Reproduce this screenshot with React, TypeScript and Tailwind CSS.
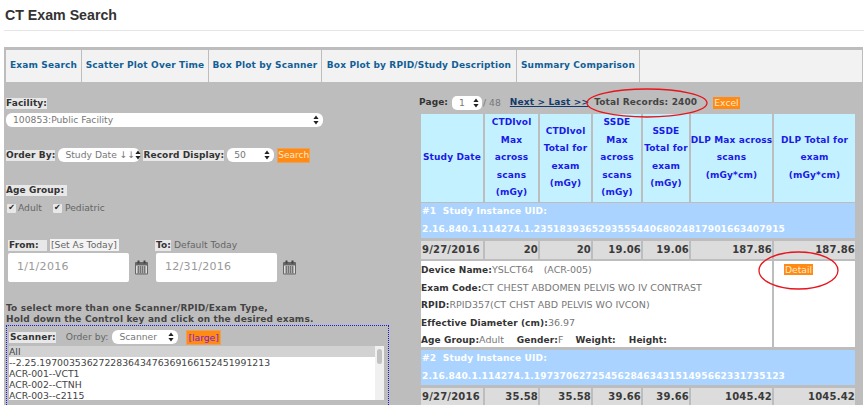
import type { ReactNode } from 'react';

const Updown = () => (
  <svg width="6" height="10" viewBox="0 0 6 10" className="shrink-0">
    <path d="M3 0.5 L5.6 4 H0.4 Z M3 9.5 L5.6 6 H0.4 Z" fill="#222" />
  </svg>
);

const FakeSelect = ({ label, className }: { label: string; className: string }) => (
  <div className={`flex items-center justify-between bg-white rounded-[6px] text-[#777] text-[9.2px] pl-[7px] pr-[4px] h-[14px] ${className}`}>
    <span className="whitespace-nowrap">{label}</span>
    <Updown />
  </div>
);

const Calendar = () => (
  <svg width="15" height="15" viewBox="0 0 15 15" className="shrink-0">
    <rect x="1" y="2" width="13" height="12.5" fill="#666" rx="1" />
    <rect x="2" y="5.5" width="11" height="8" fill="#ddd" />
    <rect x="3.5" y="0.5" width="2" height="3" fill="#444" />
    <rect x="9.5" y="0.5" width="2" height="3" fill="#444" />
    <path d="M3 7h9M3 9h9M3 11h9M3 13h9M4.5 6v7M6.5 6v7M8.5 6v7M10.5 6v7" stroke="#666" strokeWidth="0.8" />
  </svg>
);

const columns = 'grid grid-cols-[62px_53px_51px_48px_46px_81px_81px] gap-[2px]';

const DataRow = ({ values }: { values: string[] }) => (
  <div className={`${columns} h-[18px] mt-[3px] leading-[18px] font-bold text-[#3a3a3a] text-[10px] tracking-[0.2px]`}>
    {values.map((v, i) => (
      <div key={i} className={`bg-[#dcdcdc] ${i === 0 ? 'pl-[1px]' : 'text-right'}`}>{v}</div>
    ))}
  </div>
);

const UidRow = ({ n, uid, className }: { n: number; uid: string; className: string }) => (
  <div className={`bg-[#aad4ff] h-[35px] text-white font-bold text-[9px] tracking-[0.18px] leading-[17.5px] px-[1px] ${className}`}>
    <div className="whitespace-pre">{`#${n}  Study Instance UID:`}</div>
    <div>{uid}</div>
  </div>
);

const Head = ({ lines }: { lines: string[] }) => (
  <div className="bg-[#c4f1ff] flex flex-col items-center justify-center text-[#1a1ae6] font-bold text-[9px] tracking-[0.15px] leading-[17.5px] whitespace-nowrap">
    {lines.map((l) => (
      <div key={l}>{l}</div>
    ))}
  </div>
);

const Tab = ({ label, className }: { label: string; className: string }) => (
  <div className={`bg-[#f2f2f2] flex items-center justify-center text-[#125f96] font-bold text-[9px] tracking-[0.15px] whitespace-nowrap ${className}`}>
    {label}
  </div>
);

const Label = ({ children, className = '' }: { children: ReactNode; className?: string }) => (
  <span className={`bg-[#e8e8e8] font-bold text-[#333] text-[9px] tracking-[0.1px] leading-[11px] ${className}`}>{children}</span>
);

const B = ({ children, className = '' }: { children: ReactNode; className?: string }) => (
  <span className={`font-bold text-[#333] text-[9px] tracking-[0.1px] ${className}`}>{children}</span>
);

const InfoLine = ({ children }: { children: ReactNode }) => (
  <div className="h-[17.5px] whitespace-nowrap">{children}</div>
);

export default function App() {
  return (
    <div className="relative w-[864px] h-[405px] overflow-hidden bg-white font-['DejaVu_Sans',sans-serif] text-[9.2px]">
      <div className="h-[31px] ml-[4px] border-b border-[#e6e6e6] font-['Liberation_Sans',sans-serif] font-bold text-[#333] text-[14.2px] pt-[6px] pl-[1px] leading-[18px]">
        CT Exam Search
      </div>

      <div className="ml-[4px] mt-[16px] w-[859px] h-[360px] bg-[#bdbdbd] pt-[3px] pl-[2px]">
        <div className="flex gap-[1px] h-[32px] w-[856px]">
          <Tab label="Exam Search" className="w-[75px]" />
          <Tab label="Scatter Plot Over Time" className="w-[126px]" />
          <Tab label="Box Plot by Scanner" className="w-[112px]" />
          <Tab label="Box Plot by RPID/Study Description" className="w-[194px]" />
          <Tab label="Summary Comparison" className="w-[122px]" />
          <div className="flex-1 bg-[#f2f2f2]" />
        </div>

        <div className="flex">
          <div className="w-[415px] shrink-0 text-[#666]">
            <div className="flex mt-[16px]"><Label>Facility:</Label></div>
            <FakeSelect label="100853:Public Facility" className="mt-[4px] w-[317px]" />

            <div className="flex items-center mt-[21px] h-[14px]">
              <Label>Order By:</Label>
              <FakeSelect label="Study Date ↓↓" className="ml-[3px] w-[82px]" />
              <Label className="ml-[3px]">Record Display:</Label>
              <FakeSelect label="50" className="ml-[3px] w-[47px]" />
              <span className="ml-[3px] bg-[#ff8a14] text-[#ffe9c9] text-[9px] leading-[13px] border border-[#e9a25c]">Search</span>
            </div>

            <div className="flex mt-[23px]"><Label className="pr-[3px]">Age Group:</Label></div>
            <div className="flex items-center mt-[6px] leading-[12px] h-[12px]">
              <span className="w-[9px] h-[9px] bg-[#e8e8e8] rounded-[1px] flex items-center justify-center text-[#222] text-[8px] font-bold ml-[1px]">✔</span>
              <span className="ml-[2px]">Adult</span>
              <span className="w-[9px] h-[9px] bg-[#e8e8e8] rounded-[1px] flex items-center justify-center text-[#222] text-[8px] font-bold ml-[11px]">✔</span>
              <span className="ml-[3px]">Pediatric</span>
            </div>

            <div className="flex mt-[25px] h-[12px] items-center ml-[2px]">
              <Label className="w-[39px] pl-[1px]">From:</Label>
              <span className="ml-[3px] w-[69px] bg-[#f4f4f4] leading-[12px] pl-[1px]">[Set As Today]</span>
              <Label className="ml-[36px] pl-[1px]">To:</Label>
              <span className="ml-[3px]">Default Today</span>
            </div>
            <div className="flex items-center mt-[2px] ml-[2px]">
              <div className="w-[121px] h-[29px] bg-white rounded-[2px] flex items-center pl-[9px] text-[#999] text-[11px] tracking-[0.3px]">1/1/2016</div>
              <div className="ml-[5px]"><Calendar /></div>
              <div className="ml-[7px] w-[121px] h-[29px] bg-white rounded-[2px] flex items-center pl-[9px] text-[#999] text-[11px] tracking-[0.3px]">12/31/2016</div>
              <div className="ml-[5px]"><Calendar /></div>
            </div>

            <div className="mt-[21px] font-bold text-[#444] text-[9px] leading-[11px] tracking-[0.15px] whitespace-nowrap">
              To select more than one Scanner/RPID/Exam Type,
              <br />
              Hold down the Control key and click on the desired exams.
            </div>

            <div className="w-[383px] h-[100px] border-t border-x border-dotted border-[#1a1ae6] pt-[4px] pl-[2px]">
              <div className="flex items-center h-[14px]">
                <Label className="pl-[1px]">Scanner:</Label>
                <span className="ml-[10px]">Order by:</span>
                <FakeSelect label="Scanner" className="ml-[4px] w-[66px]" />
                <span className="ml-[8px] bg-[#ff8a14] text-[#7a1fd0] px-[1px] leading-[13px] border border-[#e9a25c]">[large]</span>
              </div>
              <div className="mt-[2px] flex w-[375px] h-[54px] bg-white text-[#444] text-[9.3px] leading-[11px]">
                <div className="flex-1 min-w-0 overflow-hidden whitespace-nowrap">
                  <div className="bg-[#d2d2d2]">All</div>
                  <div>--2.25.197003536272283643476369166152451991213</div>
                  <div>ACR-001--VCT1</div>
                  <div>ACR-002--CTNH</div>
                  <div>ACR-003--c2115</div>
                </div>
                <div className="w-[9px] bg-[#f0f0f0] pt-[3px] pl-[2px]">
                  <div className="w-[5px] h-[15px] bg-[#c2c2c2] rounded-[3px]" />
                </div>
              </div>
            </div>
          </div>

          <div className="w-[436px] text-[#666] -ml-[2px]">
            <div className="flex items-center h-[14px] mt-[14px] text-[#444]">
              <B>Page:</B>
              <div className="ml-[4px] flex items-center justify-between w-[30px] h-[14px] bg-white rounded-[5px] text-[#777] pl-[7px] pr-[3px]">1<Updown /></div>
              <span className="text-[#777] ml-[1px]">/ 48</span>
              <span className="ml-[9px] font-bold text-[9px] tracking-[0.15px] text-[#123a6b] underline whitespace-nowrap">Next &gt; Last &gt;&gt;</span>
              <span className="ml-[5px] font-bold text-[9px] tracking-[0.15px] text-[#444] whitespace-nowrap">Total Records: 2400</span>
              <span className="ml-[16px] bg-[#ff8a14] text-[#ffe9c9] px-[1px] leading-[12px]">Excel</span>
            </div>
            <div className={`${columns} h-[87px] mt-[4px] ml-[2px]`}>
              <Head lines={['Study Date']} />
              <Head lines={['CTDIvol', 'Max', 'across', 'scans', '(mGy)']} />
              <Head lines={['CTDIvol', 'Total for', 'exam', '(mGy)']} />
              <Head lines={['SSDE', 'Max', 'across', 'scans', '(mGy)']} />
              <Head lines={['SSDE', 'Total for', 'exam', '(mGy)']} />
              <Head lines={['DLP Max across', 'scans', '(mGy*cm)']} />
              <Head lines={['DLP Total for', 'exam', '(mGy*cm)']} />
            </div>

            <div className="ml-[2px] w-[434px]">
              <UidRow n={1} uid="2.16.840.1.114274.1.235183936529355544068024817901663407915" className="mt-[2px]" />
              <DataRow values={['9/27/2016', '20', '20', '19.06', '19.06', '187.86', '187.86']} />
              <div className="flex gap-[2px] h-[86px] mt-[2px] leading-[17.5px]">
                <div className="w-[351px] bg-white text-[#777] text-[9.5px]">
                  <InfoLine><B>Device Name:</B>YSLCT64<span className="ml-[10px]">(ACR-005)</span></InfoLine>
                  <InfoLine><B>Exam Code:</B>CT CHEST ABDOMEN PELVIS WO IV CONTRAST</InfoLine>
                  <InfoLine><B>RPID:</B>RPID357(CT CHST ABD PELVIS WO IVCON)</InfoLine>
                  <InfoLine><B>Effective Diameter (cm):</B>36.97</InfoLine>
                  <InfoLine>
                    <B>Age Group:</B>Adult
                    <B className="ml-[13px]">Gender:</B>F
                    <B className="ml-[12px]">Weight:</B>
                    <B className="ml-[13px]">Height:</B>
                  </InfoLine>
                </div>
                <div className="flex-1 bg-white pl-[10px] pt-[3px]">
                  <span className="block w-fit bg-[#ff8a14] text-[#ffe9c9] px-[1px] leading-[11px]">Detail</span>
                </div>
              </div>
              <UidRow n={2} uid="2.16.840.1.114274.1.197370627254562846343151495662331735123" className="mt-[3px]" />
              <DataRow values={['9/27/2016', '35.58', '35.58', '39.66', '39.66', '1045.42', '1045.42']} />
            </div>
          </div>
        </div>
      </div>

      <svg className="absolute left-0 top-0 pointer-events-none" width="864" height="405">
        <ellipse cx="647" cy="103" rx="60" ry="14" fill="none" stroke="#e8141c" strokeWidth="1.3" />
        <ellipse cx="798.5" cy="270.5" rx="39.5" ry="18.5" fill="none" stroke="#e8141c" strokeWidth="1.3" />
      </svg>
    </div>
  );
}
